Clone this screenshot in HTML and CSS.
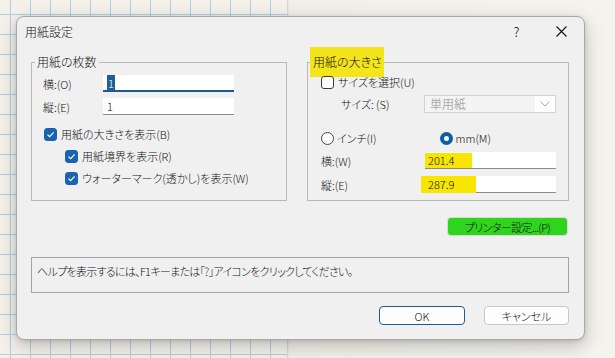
FILE: index.html
```html
<!DOCTYPE html>
<html lang="ja">
<head>
  <meta charset="UTF-8">
  <title>用紙設定</title>
  <link rel="stylesheet" href="styles.css">
</head>
<body>
  <div class="dialog">
    <div class="titlebar">
      <span class="title">用紙設定</span>
      <span class="tb-btn">?</span>
      <span class="tb-btn">
        <svg width="11" height="11" viewBox="0 0 11 11"><path d="M0.5 0.5L10.5 10.5M10.5 0.5L0.5 10.5" stroke="#111" stroke-width="1.1" fill="none"/></svg>
      </span>
    </div>

    <div class="groups">
      <fieldset class="group group-left">
        <legend>用紙の枚数</legend>
        <div class="row first">
          <span class="lbl">横:(O)</span>
          <div class="field focused"><span class="sel">1</span></div>
        </div>
        <div class="row">
          <span class="lbl">縦:(E)</span>
          <div class="field">1</div>
        </div>
        <div class="check-row top">
          <span class="cb checked"><svg width="9" height="9" viewBox="0 0 9 9"><path d="M1.5 4.6L3.6 6.6L7.6 2.4" stroke="#fff" stroke-width="1.2" fill="none"/></svg></span>
          用紙の大きさを表示(B)
        </div>
        <div class="check-row sub">
          <span class="cb checked"><svg width="9" height="9" viewBox="0 0 9 9"><path d="M1.5 4.6L3.6 6.6L7.6 2.4" stroke="#fff" stroke-width="1.2" fill="none"/></svg></span>
          用紙境界を表示(R)
        </div>
        <div class="check-row sub">
          <span class="cb checked"><svg width="9" height="9" viewBox="0 0 9 9"><path d="M1.5 4.6L3.6 6.6L7.6 2.4" stroke="#fff" stroke-width="1.2" fill="none"/></svg></span>
          ウォーターマーク(透かし)を表示(W)
        </div>
      </fieldset>

      <fieldset class="group group-right">
        <legend class="marked">用紙の大きさ</legend>
        <div class="check-row size-check">
          <span class="cb"></span>
          サイズを選択(U)
        </div>
        <div class="row size-row">
          <span class="lbl size-lbl">サイズ: (S)</span>
          <div class="select">
            <span class="select-text">単用紙</span>
            <span class="select-arrow"><svg width="10" height="6" viewBox="0 0 10 6"><path d="M0.5 0.5L5 5L9.5 0.5" stroke="#a8a8a8" fill="none"/></svg></span>
          </div>
        </div>
        <div class="radio-row">
          <span class="radio-opt"><span class="radio"></span>インチ(I)</span>
          <span class="radio-opt mm"><span class="radio on"></span>mm(M)</span>
        </div>
        <div class="row dim-row first-dim">
          <span class="lbl dim-lbl">横:(W)</span>
          <div class="field dim"><span class="hl">201.4</span></div>
        </div>
        <div class="row dim-row">
          <span class="lbl dim-lbl">縦:(E)</span>
          <div class="field dim"><span class="hl wide">287.9</span></div>
        </div>
      </fieldset>
    </div>

    <div class="printer-row">
      <button class="btn printer">プリンター設定...(P)</button>
    </div>

    <div class="help">ヘルプを表示するには、F1キーまたは「?」アイコンをクリックしてください。</div>

    <div class="actions">
      <button class="btn ok">OK</button>
      <button class="btn cancel">キャンセル</button>
    </div>
  </div>
</body>
</html>
```

FILE: styles.css
```css
/* Basic Reset */
* { margin: 0; padding: 0; box-sizing: border-box; }
body {
  font-family: "Noto Sans CJK JP", "Noto Sans", sans-serif;
  font-size: 11px;
  font-weight: 300;
  font-feature-settings: "palt";
  color: #111;
  width: 615px;
  height: 358px;
  overflow: hidden;
  padding: 16px 0 0 16px;
  background:
    linear-gradient(to right, transparent 287px, #cfcec8 287px, #f0efe9 289px, #f4f3ee 100%),
    linear-gradient(to right, #b3cce8 1px, transparent 1px) 10px 0 / 20px 20px,
    linear-gradient(to bottom, #b3cce8 1px, transparent 1px) 0 14px / 20px 20px,
    #f3f1ea;
}

.dialog {
  width: 569px;
  height: 324px;
  background: #f0f0f0;
  border: 1px solid #a9a9a9;
  border-radius: 8px;
  box-shadow: 0 6px 18px rgba(0,0,0,0.22), 0 1px 4px rgba(0,0,0,0.12);
}

/* title bar */
.titlebar {
  height: 29px;
  display: flex;
  align-items: center;
  padding-left: 8px;
}
.title { flex: 1; font-size: 12px; }
.tb-btn {
  width: 45px;
  font-size: 13px;
  display: flex;
  justify-content: center;
}

/* group boxes */
.groups {
  display: flex;
  gap: 20px;
  padding: 8px 0 0 14px;
}
.group {
  border: 1px solid #b8b8b8;
  height: 147px;
  padding: 0 10px 0 11px;
  min-width: 0;
}
.group-left { width: 256px; }
.group-right { width: 262px; padding-left: 13px; }
legend {
  font-size: 12px;
  line-height: 16px;
  padding: 0 2px;
  margin-left: -8px;
}
legend.marked {
  margin-left: -11px;
  padding: 0 2px 0 3px;
  background: #f4e41a;
  box-shadow: 0 -7px 0 #f4e41a, 0 7px 0 #f4e41a;
}

.row {
  display: flex;
  align-items: center;
  height: 17px;
  margin-top: 6px;
}
.row.first { margin-top: 5px; }
.lbl { width: 60px; flex-shrink: 0; }

.field {
  width: 131px;
  height: 17px;
  background: #fff;
  border-bottom: 1px solid #8c8c8c;
  padding-left: 4px;
  line-height: 16px;
}
.field.focused { border-bottom: 2px solid #1b5a8c; }
.sel {
  background: #1e5f95;
  color: #fff;
  padding: 0 1px;
}

/* checkboxes */
.check-row {
  display: flex;
  align-items: center;
  gap: 4px;
  height: 22px;
  padding-left: 1px;
}
.check-row.top { margin-top: 8px; }
.check-row.sub { padding-left: 22px; }
.cb {
  width: 13px;
  height: 13px;
  border: 1px solid #3c3c3c;
  border-radius: 3px;
  background: #fff;
  display: flex;
  align-items: center;
  justify-content: center;
}
.cb.checked {
  background: #1b62b0;
  border-color: #1b62b0;
}

/* right group */
.size-check { margin-top: 2px; height: 20px; padding-left: 0; }
.size-row { margin-top: 2px; height: 20px; }
.size-lbl { width: 103px; padding-left: 20px; }
.select {
  width: 132px;
  height: 18px;
  display: flex;
  border: 1px solid #d2d2d2;
  background: #f4f4f4;
}
.select-text {
  flex: 1;
  color: #8c8c8c;
  font-size: 12px;
  padding-left: 5px;
  line-height: 16px;
}
.select-arrow {
  width: 20px;
  background: #fff;
  display: flex;
  align-items: center;
  justify-content: center;
}

.radio-row {
  display: flex;
  align-items: center;
  height: 20px;
  margin-top: 14px;
}
.radio-opt {
  display: flex;
  align-items: center;
  gap: 3px;
  width: 119px;
}
.radio {
  width: 13px;
  height: 13px;
  border: 1px solid #444;
  border-radius: 50%;
  background: #fff;
}
.radio.on {
  border: 4px solid #0c5ea6;
}

.dim-row { margin-top: 7px; }
.dim-row.first-dim { margin-top: 4px; }
.dim-lbl { width: 104px; }
.field.dim { padding-left: 0; }
.hl {
  display: inline-block;
  background: #f8e600;
  padding: 0 18px 0 3px;
  line-height: 15px;
}
.hl.wide {
  margin-left: -4px;
  padding: 1px 22px 1px 7px;
}

/* buttons */
.btn {
  font-family: inherit;
  font-size: 11px;
  font-weight: 300;
  font-feature-settings: "palt";
  color: #111;
  background: #fdfdfd;
  border: 1px solid #c8c8c8;
  border-radius: 4px;
  height: 19px;
  line-height: 16px;
}
.printer-row {
  display: flex;
  justify-content: flex-end;
  padding-right: 16px;
  margin-top: 16px;
}
.btn.printer {
  width: 121px;
  letter-spacing: -0.6px;
  background: #2fd41c;
  border-color: #d9d9d9;
}

.help {
  margin: 21px 15px 0 14px;
  height: 36px;
  border: 1px solid #a5a5a5;
  padding: 5px 0 0 5px;
  letter-spacing: -0.7px;
}

.actions {
  display: flex;
  justify-content: flex-end;
  gap: 19px;
  padding-right: 15px;
  margin-top: 13px;
}
.btn.ok {
  width: 86px;
  border: 1px solid #1f5b8c;
}
.btn.cancel { width: 85px; }
```
